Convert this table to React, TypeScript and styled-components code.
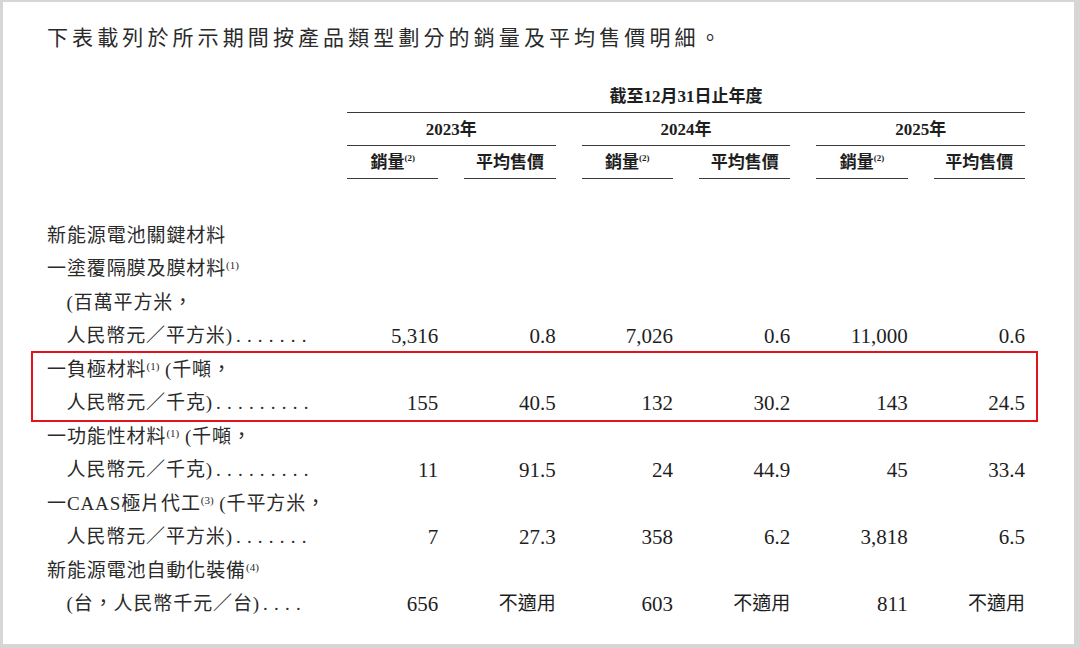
import React from "react";
import styled, { createGlobalStyle } from "styled-components";

const Global = createGlobalStyle`
  html, body { margin: 0; padding: 0; background: #ffffff; }
  body {
    font-family: "Liberation Serif", "Noto Sans CJK TC", serif;
    color: #262626;
  }
`;

const Frame = styled.div`
  box-sizing: border-box;
  width: 1080px;
  height: 648px;
  border-style: solid;
  border-color: #d6d6d6;
  border-width: 2px 6px 4px 3px;
  padding: 19px 0 0 44px;
  background: #ffffff;
  overflow: hidden;
`;

const Title = styled.div`
  font-family: "Noto Sans CJK TC", sans-serif;
  font-size: 21px;
  line-height: 30px;
  letter-spacing: 4.1px;
  color: #2b2b2b;
  margin: 0 0 29px 0;
`;

const Grid = styled.div`
  display: grid;
  grid-template-columns: 274px repeat(6, 1fr);
  column-gap: 26px;
  width: 978px;
`;

const HeadCell = styled.div<{ $col: number; $span: number }>`
  grid-column: ${(p) => p.$col} / span ${(p) => p.$span};
  text-align: center;
  font-weight: 700;
  font-size: 17px;
  line-height: 20px;
  padding: 7px 0 5px;
  border-bottom: 1.5px solid #3a3a3a;
  color: #1e1e1e;
  white-space: nowrap;
`;

const HeadSup = styled.sup`
  font-size: 9px;
  line-height: 0;
  vertical-align: 7px;
  font-weight: 700;
`;

const Body = styled.div`
  margin-top: 40px;
  width: 978px;
`;

const Row = styled(Grid)`
  height: 33.5px;
  align-items: center;
`;

const Label = styled.div<{ $indent: number }>`
  grid-column: 1;
  padding-left: ${(p) => p.$indent * 19.5}px;
  font-size: 19px;
  line-height: 24px;
  letter-spacing: 0.9px;
  white-space: nowrap;
  color: #2a2a2a;
`;

const Dots = styled.span`
  letter-spacing: 6.2px;
  margin-left: 3px;
`;

const Sup = styled.sup`
  font-size: 11px;
  line-height: 0;
  vertical-align: 6px;
  letter-spacing: 0;
`;

const Num = styled.div<{ $cjk?: boolean }>`
  text-align: right;
  font-size: ${(p) => (p.$cjk ? "19px" : "21px")};
  line-height: 24px;
  color: #1e1e1e;
  white-space: nowrap;
`;

const Highlight = styled.div`
  border: 2px solid #e3121c;
  margin: -2px -13px -2px -16px;
  padding: 0 11px 0 14px;
`;

type RowData = {
  label: React.ReactNode;
  indent: number;
  dots?: number;
  values?: string[];
};

const LineRow: React.FC<RowData> = ({ label, indent, dots, values }) => (
  <Row>
    <Label $indent={indent}>
      {label}
      {dots ? <Dots>{".".repeat(dots)}</Dots> : null}
    </Label>
    {values
      ? values.map((v, i) => (
          <Num key={i} $cjk={/[\u4e00-\u9fff]/.test(v)}>
            {v}
          </Num>
        ))
      : null}
  </Row>
);

const groupA: RowData[] = [
  { label: "新能源電池關鍵材料", indent: 0 },
  {
    label: (
      <>
        一塗覆隔膜及膜材料<Sup>(1)</Sup>
      </>
    ),
    indent: 0,
  },
  { label: "(百萬平方米，", indent: 1 },
  {
    label: "人民幣元／平方米)",
    indent: 1,
    dots: 7,
    values: ["5,316", "0.8", "7,026", "0.6", "11,000", "0.6"],
  },
];

const groupHighlight: RowData[] = [
  {
    label: (
      <>
        一負極材料<Sup>(1)</Sup> (千噸，
      </>
    ),
    indent: 0,
  },
  {
    label: "人民幣元／千克)",
    indent: 1,
    dots: 9,
    values: ["155", "40.5", "132", "30.2", "143", "24.5"],
  },
];

const groupB: RowData[] = [
  {
    label: (
      <>
        一功能性材料<Sup>(1)</Sup> (千噸，
      </>
    ),
    indent: 0,
  },
  {
    label: "人民幣元／千克)",
    indent: 1,
    dots: 9,
    values: ["11", "91.5", "24", "44.9", "45", "33.4"],
  },
  {
    label: (
      <>
        一CAAS極片代工<Sup>(3)</Sup> (千平方米，
      </>
    ),
    indent: 0,
  },
  {
    label: "人民幣元／平方米)",
    indent: 1,
    dots: 7,
    values: ["7", "27.3", "358", "6.2", "3,818", "6.5"],
  },
  {
    label: (
      <>
        新能源電池自動化裝備<Sup>(4)</Sup>
      </>
    ),
    indent: 0,
  },
  {
    label: "(台，人民幣千元／台)",
    indent: 1,
    dots: 4,
    values: ["656", "不適用", "603", "不適用", "811", "不適用"],
  },
];

const years = ["2023", "2024", "2025"];

export default function App() {
  return (
    <>
      <Global />
      <Frame>
        <Title>下表載列於所示期間按產品類型劃分的銷量及平均售價明細。</Title>
        <Grid>
          <HeadCell $col={2} $span={6}>截至12月31日止年度</HeadCell>
          {years.map((y, i) => (
            <HeadCell key={y} $col={2 + i * 2} $span={2}>
              {y}年
            </HeadCell>
          ))}
          {years.map((y, i) => (
            <React.Fragment key={`s${y}`}>
              <HeadCell $col={2 + i * 2} $span={1}>
                銷量<HeadSup>(2)</HeadSup>
              </HeadCell>
              <HeadCell $col={3 + i * 2} $span={1}>
                平均售價
              </HeadCell>
            </React.Fragment>
          ))}
        </Grid>
        <Body>
          {groupA.map((r, i) => (
            <LineRow key={`a${i}`} {...r} />
          ))}
          <Highlight>
            {groupHighlight.map((r, i) => (
              <LineRow key={`h${i}`} {...r} />
            ))}
          </Highlight>
          {groupB.map((r, i) => (
            <LineRow key={`b${i}`} {...r} />
          ))}
        </Body>
      </Frame>
    </>
  );
}
